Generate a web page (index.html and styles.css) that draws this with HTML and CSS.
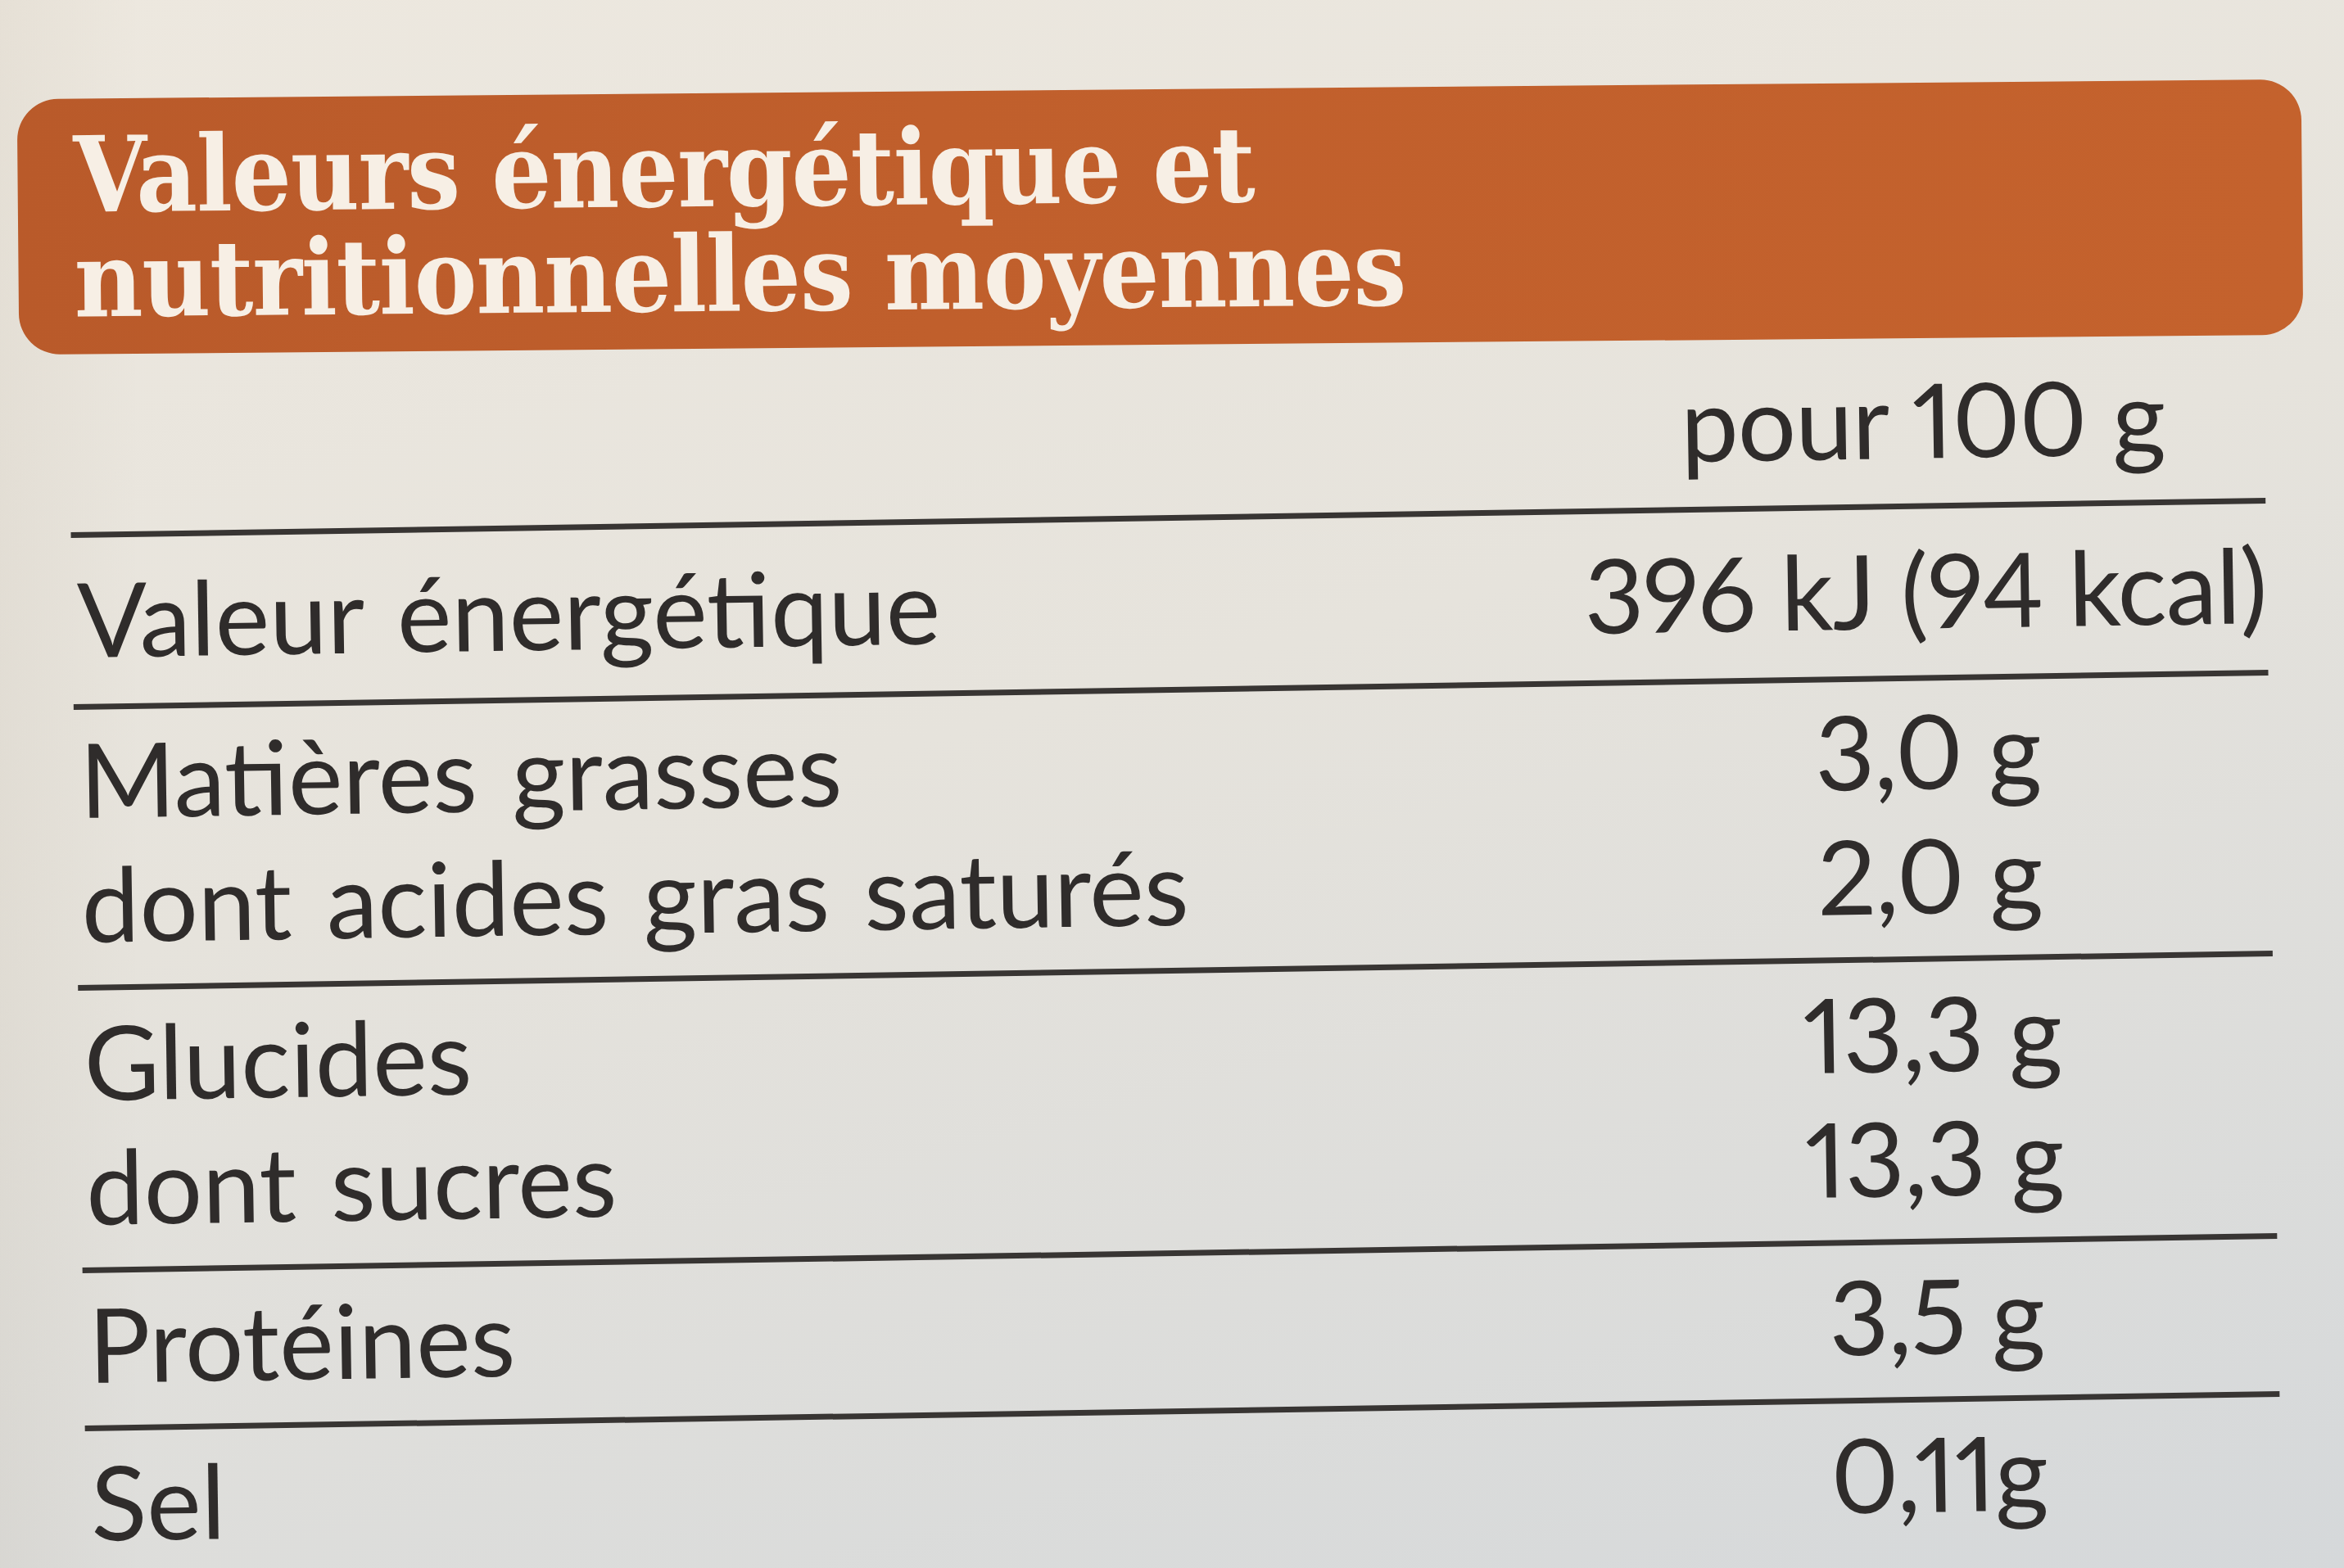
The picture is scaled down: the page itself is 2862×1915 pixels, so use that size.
FILE: index.html
```html
<!DOCTYPE html>
<html lang="fr">
<head>
<meta charset="utf-8">
<title>Valeurs énergétique et nutritionnelles moyennes</title>
<link rel="stylesheet" href="styles.css">
</head>
<body>
<div class="label">
  <div class="banner">
    <h1 class="title">Valeurs énergétique et<br>nutritionnelles moyennes</h1>
  </div>
  <div class="table">
    <div class="row head">
      <div class="cell lab"></div>
      <div class="cell val">pour 100 g</div>
    </div>
    <div class="row energy">
      <div class="cell lab">Valeur énergétique</div>
      <div class="cell val">396 kJ (94 kcal)</div>
    </div>
    <div class="row fat">
      <div class="cell lab">Matières grasses</div>
      <div class="cell val">3,0 g</div>
      <div class="cell lab">dont acides gras saturés</div>
      <div class="cell val">2,0 g</div>
    </div>
    <div class="row">
      <div class="cell lab">Glucides</div>
      <div class="cell val">13,3 g</div>
      <div class="cell lab">dont sucres</div>
      <div class="cell val">13,3 g</div>
    </div>
    <div class="row">
      <div class="cell lab">Protéines</div>
      <div class="cell val">3,5 g</div>
    </div>
    <div class="row last">
      <div class="cell lab">Sel</div>
      <div class="cell val">0,11g</div>
    </div>
  </div>
</div>
</body>
</html>
```
FILE: styles.css
```css
html, body {
  margin: 0;
  padding: 0;
}

body {
  width: 2862px;
  height: 1915px;
  overflow: hidden;
  background:
    linear-gradient(90deg, rgba(120, 100, 70, 0.06) 0%, rgba(120, 100, 70, 0) 6%),
    linear-gradient(165deg, #ede8df 0%, #e6e3dc 45%, #d5d8da 100%);
  font-family: Lato, "Open Sans", sans-serif;
  color: #2f2c2b;
}

.label {
  padding-top: 109px;
}

.banner {
  margin-left: 22px;
  width: 2789px;
  box-sizing: border-box;
  padding: 29px 0 27px 68px;
  background: linear-gradient(90deg, #b95a2a 0%, #c05f2c 40%, #c4622d 100%);
  border-radius: 50px;
  transform: rotate(-0.5deg);
}

.title {
  margin: 0;
  font-family: "DejaVu Serif Condensed", "DejaVu Serif", serif;
  font-stretch: condensed;
  font-weight: bold;
  font-size: 128px;
  line-height: 128px;
  color: #f7efe5;
  letter-spacing: -1px;
}

.table {
  margin: 29px 0 0 95px;
  width: 2680px;
  transform: rotate(-0.9deg);
  transform-origin: 1340px 50%;
}

.row {
  display: grid;
  grid-template-columns: 1fr 834px;
  font-size: 126px;
  line-height: 152px;
  padding: 10px 0 24px;
  border-bottom: 7px solid #383533;
}

.row.head {
  padding: 0 0 27px;
}

.row.energy {
  padding-top: 22px;
  padding-bottom: 29px;
}

.row.fat {
  padding-top: 8px;
}

.row.last {
  border-bottom: none;
}

.cell {
  white-space: nowrap;
}

.lab {
  padding-left: 6px;
  word-spacing: 10px;
}

.val {
  text-align: center;
  font-variant-numeric: proportional-nums;
  letter-spacing: -1px;
}
```
